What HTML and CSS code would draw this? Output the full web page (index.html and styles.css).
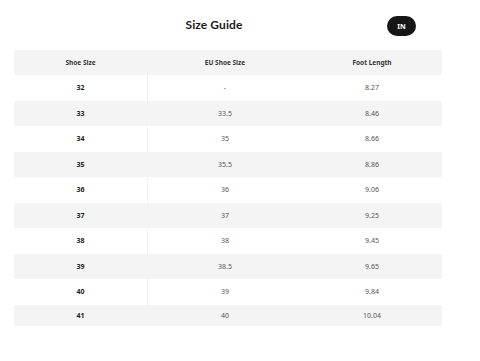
FILE: index.html
```html
<!DOCTYPE html>
<html lang="en">
<head>
    <meta charset="UTF-8">
    <meta name="viewport" content="width=device-width, initial-scale=1.0">
    <title>Size Guide</title>
    <link rel="stylesheet" href="styles.css">
</head>
<body>
    <div class="guide">
        <div class="top">
            <h1>Size Guide</h1>
            <button class="unit">IN</button>
        </div>

        <!-- size table -->
        <table class="sizes">
            <thead>
                <tr><th>Shoe Size</th><th>EU Shoe Size</th><th>Foot Length</th></tr>
            </thead>
            <tbody>
                <tr><td>32</td><td>-</td><td>8.27</td></tr>
                <tr><td>33</td><td>33.5</td><td>8.46</td></tr>
                <tr><td>34</td><td>35</td><td>8.66</td></tr>
                <tr><td>35</td><td>35.5</td><td>8.86</td></tr>
                <tr><td>36</td><td>36</td><td>9.06</td></tr>
                <tr><td>37</td><td>37</td><td>9.25</td></tr>
                <tr><td>38</td><td>38</td><td>9.45</td></tr>
                <tr><td>39</td><td>38.5</td><td>9.65</td></tr>
                <tr><td>40</td><td>39</td><td>9.84</td></tr>
                <tr><td>41</td><td>40</td><td>10.04</td></tr>
            </tbody>
        </table>
    </div>
</body>
</html>
```

FILE: styles.css
```css
body {
    margin: 0;
    padding: 0;
    background-color: #fff;
    font-family: "Noto Sans", sans-serif;
    color: #222;
}

.guide {
    width: 428px;
    padding: 0 0 0 14px;
}

.top {
    display: flex;
    align-items: center;
    height: 50px;
}

.top h1 {
    margin: 0 0 0 170px;
    width: 60px;
    text-align: center;
    font-family: Lato, sans-serif;
    font-size: 12px;
    font-weight: 700;
    color: #1a1a1a;
    letter-spacing: 0.1px;
    position: relative;
    top: -1px;
}

.unit {
    margin-left: 143px;
    width: 29px;
    height: 20px;
    border: none;
    border-radius: 10px;
    background-color: #161616;
    color: #fff;
    font-family: "Noto Sans", sans-serif;
    font-size: 7px;
    font-weight: 700;
    padding: 0;
    position: relative;
    top: 1px;
}

.sizes {
    width: 428px;
    border-collapse: collapse;
    table-layout: fixed;
}

.sizes th, .sizes td {
    text-align: center;
    padding: 0;
}

.sizes th:nth-child(1), .sizes td:nth-child(1) { width: 133px; }
.sizes th:nth-child(2), .sizes td:nth-child(2) { width: 154px; }

.sizes th:nth-child(2), .sizes td:nth-child(2) {
    border-left: 1px solid #f3f3f3;
}

.sizes th {
    height: 25px;
    background-color: #f4f4f4;
    font-size: 6.5px;
    font-weight: 700;
    color: #333;
}

.sizes td {
    height: 25.5px;
    font-size: 7px;
    color: #555;
}

.sizes td:first-child {
    font-weight: 700;
    color: #222;
}

.sizes tbody tr:nth-child(even) td {
    background-color: #f4f4f4;
}

.sizes tbody tr:last-child td {
    height: 21px;
}
```
